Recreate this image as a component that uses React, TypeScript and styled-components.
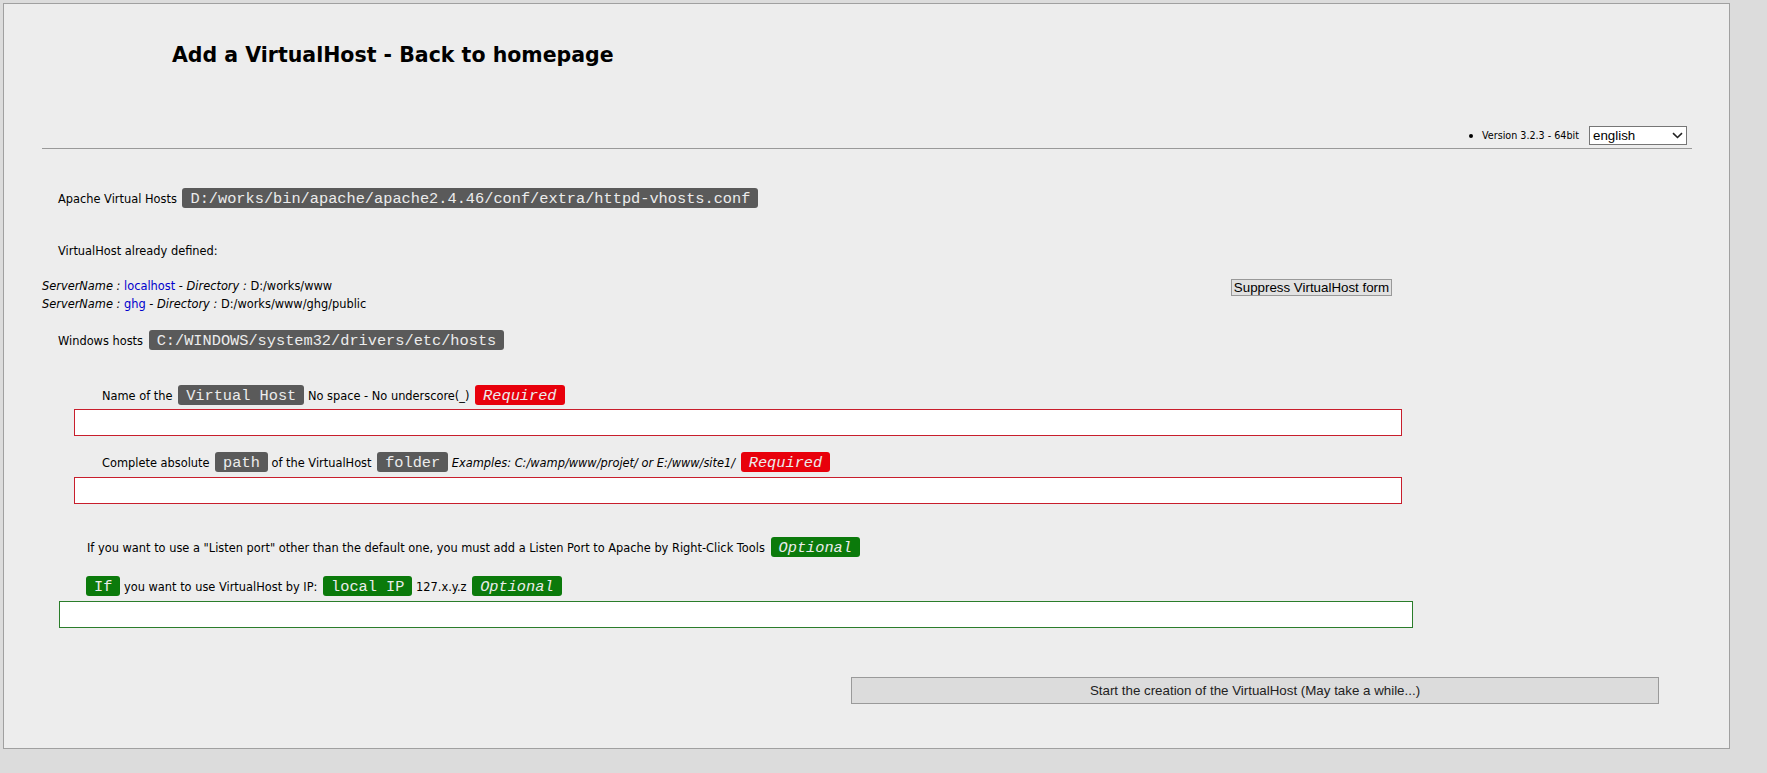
import styled, { createGlobalStyle } from 'styled-components';

const GlobalStyle = createGlobalStyle`
  html, body {
    margin: 0;
    padding: 0;
    background: #dcdcdc;
  }
  body {
    font-family: "DejaVu Sans", Verdana, sans-serif;
    font-size: 11.4px;
    color: #000;
  }
`;

type Tone = 'dark' | 'red' | 'green';

const tagColors: Record<Tone, string> = {
  dark: '#5a5a5a',
  red: '#e8000b',
  green: '#0b7a0b',
};

const borderColors: Record<string, string> = {
  red: '#c81e2c',
  green: '#2a7d2a',
};

const Page = styled.div`
  box-sizing: border-box;
  height: 773px;
  padding: 3px 0 0 3px;
  overflow: hidden;
`;

const Panel = styled.div`
  box-sizing: border-box;
  width: 1727px;
  height: 746px;
  background: #ededed;
  border: 1px solid #a0a0a0;
  padding: 39px 37px 0 38px;
`;

const Title = styled.h1`
  margin: 0 0 0 130px;
  font: bold 20.5px/24px "DejaVu Sans", Verdana, sans-serif;
  color: #000;
`;

const HeaderBar = styled.div`
  margin-top: 59px;
  display: flex;
  justify-content: flex-end;
  align-items: center;
  padding: 0 5px 3px 0;
  border-bottom: 1px solid #999;
`;

const VersionItem = styled.span`
  display: flex;
  align-items: center;
  font-size: 9.6px;
  margin-right: 10px;
  &::before {
    content: '';
    width: 4px;
    height: 4px;
    border-radius: 50%;
    background: #000;
    margin-right: 9px;
  }
`;

const LangSelect = styled.div`
  box-sizing: border-box;
  width: 98px;
  height: 19px;
  border: 1px solid #767676;
  background: #fff;
  display: flex;
  align-items: center;
  justify-content: space-between;
  padding: 0 3px 0 3px;
  font: 13.33px "Liberation Sans", Arial, sans-serif;
  color: #000;
`;

const Line = styled.div<{ $top: number; $indent: number }>`
  margin-top: ${(p) => p.$top}px;
  padding-left: ${(p) => p.$indent}px;
  height: 22px;
  line-height: 22px;
  white-space: nowrap;
`;

const Tag = styled.span<{ $tone: Tone; $italic?: boolean }>`
  display: inline-block;
  vertical-align: top;
  box-sizing: border-box;
  height: 20px;
  padding: 3px 8px 0 8px;
  line-height: 17px;
  margin-left: 2px;
  border-radius: 3px;
  font-family: "Liberation Mono", "Courier New", monospace;
  font-size: 15.3px;
  font-style: ${(p) => (p.$italic ? 'italic' : 'normal')};
  background: ${(p) => tagColors[p.$tone]};
  color: #ececec;
`;

const Em = styled.em`
  font-style: italic;
`;

const HostLink = styled.a`
  color: #0000cc;
  text-decoration: none;
`;

const HostsArea = styled.div`
  margin-top: 15px;
  display: grid;
  grid-template-columns: 1189px auto;
  align-items: start;
`;

const HostList = styled.div`
  line-height: 18px;
`;

const SmallButton = styled.button`
  margin-top: 2px;
  box-sizing: border-box;
  width: 161px;
  height: 17px;
  padding: 0;
  background: #e1e1e1;
  border: 1px solid #999;
  font: 13.33px "Liberation Sans", Arial, sans-serif;
  color: #000;
  line-height: 15px;
`;

const Field = styled.input<{ $top: number; $indent: number; $width: number; $tone: 'red' | 'green' }>`
  display: block;
  box-sizing: border-box;
  margin: ${(p) => p.$top}px 0 0 ${(p) => p.$indent}px;
  width: ${(p) => p.$width}px;
  height: 27px;
  padding: 0 4px;
  background: #fff;
  border: 1px solid ${(p) => borderColors[p.$tone]};
  outline: none;
`;

const SubmitButton = styled.button`
  display: block;
  box-sizing: border-box;
  margin: 49px 0 0 809px;
  width: 808px;
  height: 27px;
  background: #dcdcdc;
  border: 1px solid #9a9a9a;
  font: 13.33px "Liberation Sans", Arial, sans-serif;
  color: #222;
`;

function Chevron() {
  return (
    <svg width="11" height="7" viewBox="0 0 11 7">
      <path d="M1 1.2 L5.5 5.5 L10 1.2" fill="none" stroke="#222" strokeWidth="1.6" />
    </svg>
  );
}

const hosts = [
  { name: 'localhost', dir: 'D:/works/www' },
  { name: 'ghg', dir: 'D:/works/www/ghg/public' },
];

export default function App() {
  return (
    <Page>
      <GlobalStyle />
      <Panel>
        <Title>Add a VirtualHost - Back to homepage</Title>
        <HeaderBar>
          <VersionItem>Version 3.2.3 - 64bit</VersionItem>
          <LangSelect>
            <span>english</span>
            <Chevron />
          </LangSelect>
        </HeaderBar>

        <Line $top={39} $indent={16}>
          Apache Virtual Hosts <Tag $tone="dark">D:/works/bin/apache/apache2.4.46/conf/extra/httpd-vhosts.conf</Tag>
        </Line>

        <Line $top={30} $indent={16}>
          VirtualHost already defined:
        </Line>

        <HostsArea>
          <HostList>
            {hosts.map((h) => (
              <div key={h.name}>
                <Em>ServerName :</Em> <HostLink href="#">{h.name}</HostLink> - <Em>Directory :</Em> {h.dir}
              </div>
            ))}
          </HostList>
          <SmallButton>Suppress VirtualHost form</SmallButton>
        </HostsArea>

        <Line $top={17} $indent={16}>
          Windows hosts <Tag $tone="dark">C:/WINDOWS/system32/drivers/etc/hosts</Tag>
        </Line>

        <Line $top={33} $indent={60}>
          Name of the <Tag $tone="dark">Virtual Host</Tag> No space - No underscore(_){' '}
          <Tag $tone="red" $italic>
            Required
          </Tag>
        </Line>
        <Field $top={2} $indent={32} $width={1328} $tone="red" />

        <Line $top={16} $indent={60}>
          Complete absolute <Tag $tone="dark">path</Tag> of the VirtualHost <Tag $tone="dark">folder</Tag>{' '}
          <Em>Examples: C:/wamp/www/projet/ or E:/www/site1/</Em>{' '}
          <Tag $tone="red" $italic>
            Required
          </Tag>
        </Line>
        <Field $top={3} $indent={32} $width={1328} $tone="red" />

        <Line $top={33} $indent={45}>
          If you want to use a "Listen port" other than the default one, you must add a Listen Port to Apache by
          Right-Click Tools{' '}
          <Tag $tone="green" $italic>
            Optional
          </Tag>
        </Line>

        <Line $top={17} $indent={42}>
          <Tag $tone="green">If</Tag> you want to use VirtualHost by IP: <Tag $tone="green">local IP</Tag> 127.x.y.z{' '}
          <Tag $tone="green" $italic>
            Optional
          </Tag>
        </Line>
        <Field $top={3} $indent={17} $width={1354} $tone="green" />

        <SubmitButton>Start the creation of the VirtualHost (May take a while...)</SubmitButton>
      </Panel>
    </Page>
  );
}
